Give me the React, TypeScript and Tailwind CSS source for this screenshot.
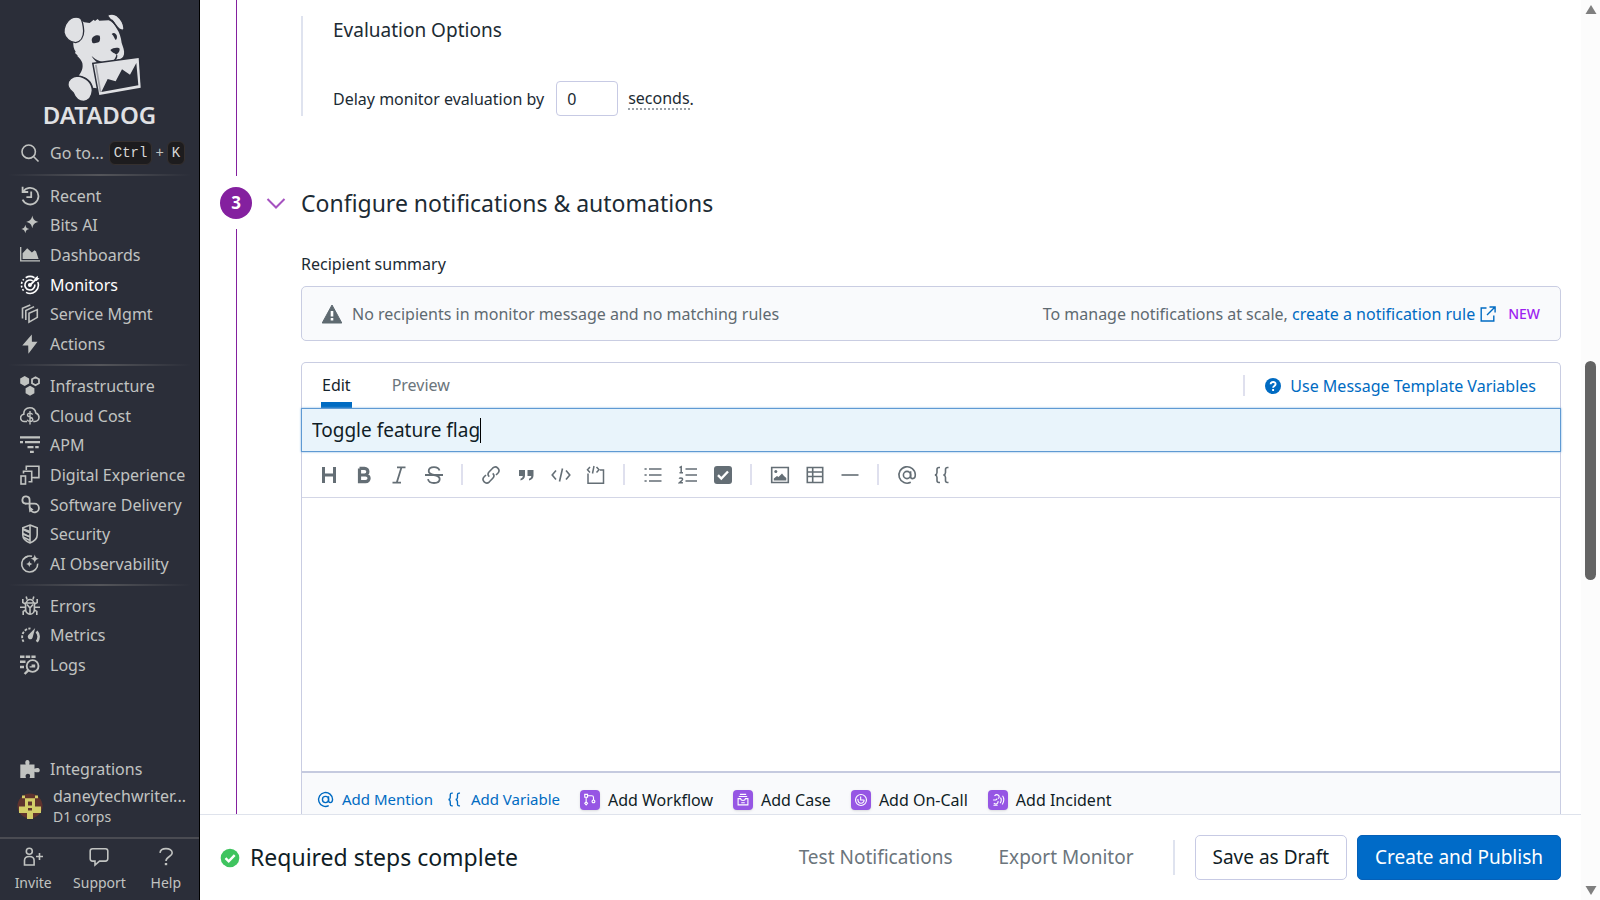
import type { ReactNode } from "react";

type IconProps = { children: ReactNode; className?: string };

function Icon({ children, className = "h-5 w-5" }: IconProps) {
  return (
    <svg
      viewBox="0 0 20 20"
      className={`${className} shrink-0`}
      fill="none"
      stroke="currentColor"
      strokeWidth="1.6"
      aria-hidden="true"
    >
      {children}
    </svg>
  );
}

const fill = { fill: "currentColor", stroke: "none" };

const icons: Record<string, ReactNode> = {
  Recent: (
    <>
      <path d="M3.2 5.6A8.3 8.3 0 1 1 2.6 13.6" strokeWidth="1.8" />
      <path d="M2.6.8v5.2h5.6" strokeWidth="1.8" />
      <path d="M11.2 5.4v5.8H6.4" strokeWidth="1.8" />
    </>
  ),
  "Bits AI": (
    <g {...fill}>
      <path d="M12.3.6c.8 4 2.200 5.500 6.200 6.300-4 .8-5.400 2.200-6.200 6.300-.8-4.100-2.200-5.500-6.200-6.300 4-.8 5.400-2.300 6.200-6.300z" />
      <path d="M5.300 9.800c.6 2.800 1.400 3.600 4.100 4.200-2.700.6-3.500 1.500-4.100 4.200-.6-2.700-1.400-3.600-4-4.200 2.600-.6 3.400-1.400 4-4.200z" />
    </g>
  ),
  Dashboards: (
    <>
      <path d="M.7 2v13.800H20" strokeWidth="1.300" />
      <path {...fill} d="M2.600 13.900V8.200l4.600-5 4.700 4.400 2.700-2.400 1.500 1.400 2.500 7.300z" />
    </>
  ),
  Monitors: (
    <>
      <path d="M5.700 2.700A8.400 8.400 0 0 1 14.500 2.700M17.800 7A8.400 8.400 0 0 1 6 17.400" />
      <path d="M3.600 15.600A8.400 8.400 0 0 1 3.800 4.200" strokeDasharray="1.900 1.700" />
      <path d="M12.700 5.800A5 5 0 1 0 14.900 9.500" />
      <path d="M9.800 10.300l7-7" strokeWidth="1.900" />
      <path {...fill} d="M14.600 3.200l3.200-2.400v2.100l1.800.3-3 2.700-2-.3z" />
      <circle {...fill} cx="9.900" cy="10.100" r="2" />
    </>
  ),
  "Service Mgmt": (
    <g strokeWidth="1.600">
      <path d="M9 9.200l8.300-3.600v7.800L9 18.200z" />
      <path d="M5.800 16V6.600l8.300-4" />
      <path d="M2.500 14.500V4.300L10.300.9" />
    </g>
  ),
  Actions: <path {...fill} d="M11.800.4L2.300 11.600h5.900L8.400 19.800l9.100-12h-5.600z" />,
  Infrastructure: (
    <>
      <g {...fill}>
        <path d="M4.700 0l4.400 2.500v5L4.700 10 .2 7.500v-5z" />
        <path d="M10 9.800l4.400 2.500v5L10 19.800l-4.400-2.500v-5z" />
      </g>
      <path d="M15.500 1.200l3.500 2v4l-3.500 2-3.500-2v-4z" strokeWidth="1.800" />
    </>
  ),
  "Cloud Cost": (
    <>
      <path d="M7 15.500H4.600a3.600 3.600 0 0 1-.8-7.200C3.500 4.500 6 1.700 9.700 1.700c3.300 0 5.700 2.200 6.100 5.300 2 .8 3.200 2.300 3.200 4.300 0 2.400-1.800 4.200-4.200 4.200h-1.600" />
      <path d="M12.600 8.600c-.5-1-1.400-1.500-2.600-1.500-1.500 0-2.500.7-2.500 2 0 2.900 5.300 1.500 5.300 4.300 0 1.200-1.100 2-2.700 2-1.400 0-2.500-.6-2.900-1.700M10 5v13.500" strokeWidth="1.400" />
    </>
  ),
  APM: (
    <path {...fill} d="M0 1.200h20v2.300H0zM0 6h3v2.200H0zM5 6h15v2.200H5zM7.500 11h6v2.200h-6zM15.200 11h3.500v2.200h-3.500zM10 15.800h3.800V18H10z" />
  ),
  "Digital Experience": (
    <>
      <path d="M6.300 5V1.200h12.600v11.400H14" />
      <path d="M3.500 8.500V6.300h8.200v10.500H8.500" />
      <rect x="1" y="11" width="4.500" height="8" />
      <path d="M11.700 12.600H14" />
    </>
  ),
  "Software Delivery": (
    <>
      <path d="M6.400 8.600H5.400a3.600 3.600 0 1 1 4.200-3.500v6.200c0 1.800.8 3 2.600 3" strokeWidth="1.800" />
      <path d="M5.200 8.700h9.400a4.300 4.300 0 1 1-4.200 5.200" strokeWidth="1.800" />
      <path {...fill} d="M8.600 11.600l5 2.900-4.200 3z" />
    </>
  ),
  Security: (
    <>
      <path d="M10 1l7.200 2.800v7.200c0 4-4 6.700-7.200 8-3.200-1.300-7.200-4-7.200-8V3.800z" />
      <path d="M10 1v18M3 5.500l7 3.300M3 9.500l7 3.400M3.600 13.300l6.400 3.200" />
      <path {...fill} d="M3 4l6.500 2.600v2L3 5.800zM3 9.600l6.500 2.500v1.500L3 11z" />
    </>
  ),
  "AI Observability": (
    <>
      <path d="M12 2.300A8 8 0 1 0 17.700 9.600" />
      <path d="M3.200 5.500A8 8 0 0 1 7.600 2.400" />
      <path {...fill} d="M14.800.6c.5 2.700 1.400 3.600 4.200 4.200-2.800.6-3.700 1.500-4.200 4.300-.6-2.800-1.500-3.700-4.300-4.300 2.800-.6 3.700-1.500 4.300-4.200zM9.300 6.800c.4 2 1.200 2.800 3.200 3.200-2 .4-2.800 1.200-3.200 3.200-.4-2-1.200-2.800-3.200-3.200 2-.4 2.800-1.200 3.200-3.200z" />
    </>
  ),
  Errors: (
    <>
      <path d="M5.600 7h8.800v6.200c0 3-2 5-4.400 5s-4.400-2-4.400-5z" />
      <path d="M6.500 7a3.500 3.500 0 0 1 7 0M10 18v-6l-3-3.500M10 12l3-3.500M7 3.500L6.200.5M13 3.500l.8-3" />
      <path d="M5.600 8L2.800 6.600V3M14.400 8l2.800-1.400V3M5.600 11.200H0M14.400 11.200H20M5.800 14l-2.600 1.400V19M14.200 14l2.600 1.400V19" />
    </>
  ),
  Metrics: (
    <>
      <path d="M3.600 16.800A8.600 8.600 0 0 1 10.500 3.400" strokeDasharray="2.600 1.400" strokeWidth="1.900" />
      <path d="M16.500 6.500c2.500 2.500 3 6.800.3 10.200" strokeWidth="2.600" />
      <path {...fill} d="M15.200 3L12.600 12.400c-.5 1.700-2.300 2.400-3.700 1.500-1.300-.9-1.500-2.600-.5-3.800z" />
    </>
  ),
  Logs: (
    <>
      <path {...fill} d="M0 .5h4.500v2.600H0zM5.700.5h4.500v2.600H5.700zM11.400.5h4.200v2.600h-4.200zM0 5.500h5.500v2.600H0zM0 10.700h4v2.600H0z" />
      <circle cx="12.600" cy="11" r="5.900" strokeWidth="1.900" />
      <path d="M8.500 15.200L4.600 19" strokeWidth="2.400" />
      <path {...fill} d="M9.600 11.200h2V9.400h3.600v3.200H9.600z" />
    </>
  ),
};

const groups = [
  { cls: "h-[178px]", items: ["Recent", "Bits AI", "Dashboards", "Monitors", "Service Mgmt", "Actions"] },
  {
    cls: "h-[208px]",
    items: ["Infrastructure", "Cloud Cost", "APM", "Digital Experience", "Software Delivery", "Security", "AI Observability"],
  },
  { cls: "h-[89px]", items: ["Errors", "Metrics", "Logs"] },
];

function DogLogo() {
  return (
    <svg viewBox="173 38 252 264" className="h-[88px] w-[84px]" aria-hidden="true">
      <g fill="#e0e1e4">
        {/* head, neck and chest */}
        <path d="M240 60L252 66L268 68L280 58L284 62L292 56L297 61L325 60C335 64 344 74 350 86C358 98 362 112 364 128C368 140 373 150 371 162C369 172 362 177 354 177L346 182L284 190L290 230L290 264L278 262C276 246 262 230 240 228L235 226C244 214 249 204 246 188C243 178 238 174 230 166L233 166L224 158L226 154C220 146 218 136 219 122Z" />
        <path d="M276 188L340 182L350 200L290 262Z" />
      </g>
      <g fill="#e0e1e4" stroke="#2b2e39" strokeWidth="4">
        {/* ears */}
        <path d="M212 54C198 62 190 80 191 97C194 114 210 126 226 127C241 124 250 110 250 92C249 76 247 62 241 54C232 49 221 50 212 54Z" />
        <path d="M321 46C329 39 342 41 350 46C360 54 370 70 371 84C370 92 364 90 357 86C346 78 341 62 330 57Z" />
        {/* front paw */}
        <path d="M232 227C214 228 203 240 203 252C202 264 212 270 219 278C225 294 236 303 250 303C266 301 275 288 276 270C275 246 256 230 232 227Z" />
      </g>
      <g fill="#2b2e39">
        <path d="M274 119C275 110 283 105 292 105L298 106C300 112 300 120 296 125C289 128 281 130 276 127Z" />
        <path d="M334 101C340 95 346 98 349 105C351 111 350 117 346 119C342 115 341 107 334 101Z" />
        <path d="M330 149C338 143 348 141 357 144C360 150 355 159 348 163C343 158 334 157 330 149Z" />
        <path d="M274 167C292 184 312 188 326 185C338 183 345 177 348 163L351 164C352 173 348 180 338 186C326 194 306 194 294 188C284 182 277 174 274 167Z" />
        <path d="M334 56C344 66 349 78 352 85L347 79C340 72 337 64 334 56Z" />
      </g>
      {/* picture held in the mouth */}
      <path d="M280 191L415 173L421 262L297 284Z" fill="#e0e1e4" stroke="#2b2e39" strokeWidth="9" />
      <path d="M280 191L415 173L421 262L297 284Z" fill="#e0e1e4" />
      <path d="M284 194L289 193L303 275L298 276Z" fill="#2b2e39" opacity="0.35" />
      <path d="M303 275L322 236L346 243L365 207L389 223L408 188L414 255Z" fill="#2b2e39" />
    </svg>
  );
}

function Divider() {
  return <div className="mx-2 my-[5px] h-[2px] shrink-0 bg-linear-to-r from-transparent via-[#54555a] to-transparent" />;
}

function Sidebar() {
  return (
    <aside className="flex w-[200px] shrink-0 flex-col border-r border-black bg-[#2b2e39] text-base text-[#c1c3c1]">
      <a href="#home" aria-label="Datadog home" className="flex flex-col items-center pt-[13px] text-[#e0e1e4]">
        <DogLogo />
        <span className="text-2xl leading-[28px] font-semibold">DATADOG</span>
      </a>
      <button className="mt-[7px] flex h-[33px] shrink-0 items-center pl-5 text-left">
        <Icon>
          <circle cx="8.700" cy="8.700" r="6.700" />
          <path d="M13.500 13.500l5 5" />
        </Icon>
        <span className="ml-[10px]">Go to...</span>
        <kbd className="ml-[5px] rounded-md border border-[#35302f] bg-[#1d1c1e] px-1 py-px font-['Liberation_Mono',monospace] text-sm text-[#d8d8d8]">Ctrl</kbd>
        <span className="mx-[3px] font-['Liberation_Mono',monospace] text-sm">+</span>
        <kbd className="rounded-md border border-[#35302f] bg-[#1d1c1e] px-1 py-px font-['Liberation_Mono',monospace] text-sm text-[#d8d8d8]">K</kbd>
      </button>
      <nav>
        {groups.map((g) => (
          <div key={g.cls}>
            <Divider />
            <ul className={`${g.cls} grid auto-rows-fr`}>
              {g.items.map((name) => (
                <li key={name} className="flex">
                  <a
                    href="#nav"
                    className={`flex flex-1 items-center gap-[10px] pl-5 leading-6 whitespace-nowrap ${name === "Monitors" ? "text-white" : ""}`}
                  >
                    <Icon>{icons[name]}</Icon>
                    {name}
                  </a>
                </li>
              ))}
            </ul>
          </div>
        ))}
      </nav>
      <div className="mt-auto">
        <a href="#integrations" className="flex h-[30px] items-center gap-[10px] pl-5">
          <Icon>
            <path
              {...fill}
              d="M.3 5.500h5.400c-.8-1.600-.6-4.500 1.700-4.500s2.500 2.900 1.700 4.500h5.400v4.200c1.500-.8 5.300-1.400 5.300 1.500s-3.800 2.300-5.300 1.500V19H9.600c1-2.500.4-4.300-1.700-4.300S5 16.500 6 19H.3z"
            />
          </Icon>
          Integrations
        </a>
        <button className="flex h-[44px] w-full items-center gap-[10px] pl-[17px] text-left">
          <svg viewBox="0 0 26 26" className="h-[26px] w-[26px] shrink-0" aria-hidden="true">
            <circle cx="13" cy="13" r="12.500" fill="#5f332e" />
            <path
              fill="#d3cd68"
              fillRule="evenodd"
              d="M5 2.500h3v2.800H5zM18 2.500h3v2.800h-3zM8 5.300h10v8.200h6v6.500h-8v6h-6v-6H2v-6.500h6zM11 8.500v4h4v-4zM11 15v2.500h4V15z"
            />
          </svg>
          <span className="flex flex-col">
            <span className="leading-[22px]">daneytechwriter...</span>
            <span className="text-sm leading-[20px]">D1 corps</span>
          </span>
        </button>
      </div>
      <div className="mt-[9px] grid h-[63px] shrink-0 grid-cols-3 border-t-2 border-[#4a4b52] text-sm">
        <button className="flex flex-col items-center gap-[6px] pt-2">
          <Icon>
            <circle cx="6.300" cy="4.200" r="3" />
            <path d="M1.500 18v-4.500c0-2.500 2-4 4.800-4s4.800 1.500 4.800 4V18z" />
            <path d="M13 9.500h7M16.500 6v7" />
          </Icon>
          Invite
        </button>
        <button className="flex flex-col items-center gap-[6px] pt-2">
          <Icon>
            <path d="M3.500 1.800h13a2.300 2.300 0 0 1 2.300 2.300v7.700a2.300 2.300 0 0 1-2.300 2.300h-6L6 18v-3.900H3.500a2.300 2.300 0 0 1-2.300-2.300V4.100a2.300 2.300 0 0 1 2.300-2.300z" />
          </Icon>
          Support
        </button>
        <button className="flex flex-col items-center gap-[6px] pt-2">
          <Icon>
            <path d="M4 5.800c.3-2.600 2.700-4.200 6-4.200 3.400 0 6.200 1.600 6.200 4.400 0 3.600-6.200 3.400-6.200 8" />
            <path d="M10 16v2.200" strokeWidth="2.400" />
          </Icon>
          Help
        </button>
      </div>
    </aside>
  );
}

const atSign = (
  <>
    <circle cx="10" cy="10" r="3.600" />
    <path d="M13.600 6.200v5c0 1.500.8 2.400 2 2.400 1.700 0 2.700-1.500 2.700-3.800A8.200 8.200 0 1 0 13.800 17.300" />
  </>
);
const braces = (
  <path d="M8 2.500H7c-1.500 0-2 .8-2 2v3c0 1.500-.7 2.200-2 2.500 1.300.3 2 1 2 2.500v3c0 1.200.5 2 2 2h1M16.500 2.500h-1c-1.500 0-2 .8-2 2v3c0 1.500-.7 2.200-2 2.500 1.300.3 2 1 2 2.500v3c0 1.200.5 2 2 2h1" />
);

const tools: { label: string; icon: ReactNode }[][] = [
  [
    { label: "Heading", icon: <path strokeWidth="3" d="M4.500 2v16M15.500 2v16M4.500 10h11" /> },
    { label: "Bold", icon: <path strokeWidth="3.200" d="M5.500 3.400v13.200h6c4.800 0 4.800-6.600 0-6.600h-6M5.500 3.400h5c4.500 0 4.500 6.600 0 6.600" /> },
    { label: "Italic", icon: <path strokeWidth="1.800" d="M8 2.300h8.500M3.500 17.700H12M12.500 2.300l-4.800 15.400" /> },
    { label: "Strikethrough", icon: <path strokeWidth="1.800" d="M15.500 5.500c-.6-2-2.500-3.300-5.500-3.300-3.200 0-5.300 1.500-5.300 3.900 0 2.200 1.500 3.200 5.300 3.900 4 .8 5.700 1.800 5.700 4 0 2.400-2.200 4-5.700 4-3.400 0-5.500-1.500-6-3.900M1 10h18" /> },
  ],
  [
    { label: "Link", icon: <path d="M8.300 11.700c-1.600-1.500-1.500-3.500-.1-5l3.400-3.500c1.600-1.500 3.800-1.500 5.200-.1s1.500 3.600 0 5.200L15 10M11.700 8.300c1.600 1.500 1.500 3.500.1 5l-3.400 3.500c-1.600 1.500-3.800 1.500-5.200.1s-1.500-3.600 0-5.200L5 10" /> },
    { label: "Quote", icon: <path {...fill} d="M3 5h6v5.500c0 2.500-1.600 4.300-4.500 5v-1.800c1.400-.5 2.200-1.300 2.300-2.700H3zM11.500 5h6v5.500c0 2.500-1.600 4.300-4.500 5v-1.800c1.400-.5 2.200-1.300 2.300-2.700h-3.800z" /> },
    { label: "Code", icon: <path d="M5 5.500L1.200 10 5 14.500M15 5.500l3.800 4.500-3.800 4.500M11.500 3.500l-3 13" /> },
    { label: "Code block", icon: <path strokeWidth="1.500" d="M2 8.500v9.700h15.500V5H14M4 2L1.500 4.800 4 7.500M10.500 2L13 4.800 10.500 7.500M8 1L6.500 8.500" /> },
  ],
  [
    { label: "Bulleted list", icon: <path d="M1.500 4h2.200M1.500 10h2.200M1.500 16h2.200M6 4h12.500M6 10h12.500M6 16h12.500" /> },
    { label: "Numbered list", icon: <path strokeWidth="1.500" d="M7.500 4H19M7.500 10H19M7.500 16H19M1.500 2.700l1.700-1v6M1.500 7.700H5M1.300 13.700c.3-1 3.300-1.200 3.300.5 0 1-1.600 2-3.200 3.500h3.500" /> },
    {
      label: "Checklist",
      icon: (
        <>
          <rect {...fill} x="1" y="1" width="18" height="18" rx="3" />
          <path d="M5 10.200l3.300 3.300 6.700-7" stroke="white" strokeWidth="2.400" />
        </>
      ),
    },
  ],
  [
    {
      label: "Image",
      icon: (
        <>
          <path d="M1.700 2.500h16.600v15H1.700z" />
          <path {...fill} d="M3.800 15.500v-2l3.200-2.500 1.500 1L12 8.500l2 2.500 2.300 2v2.500z" />
          <circle {...fill} cx="5.800" cy="6.500" r="1.500" />
        </>
      ),
    },
    { label: "Table", icon: <path d="M2.300 2.500h15.400v15H2.300zM2.300 7h15.400M2.300 11.500h15.400M7.700 2.500v15" /> },
    { label: "Horizontal rule", icon: <path d="M1.500 10h17" /> },
  ],
  [
    { label: "Mention", icon: atSign },
    { label: "Variable", icon: braces },
  ],
];

const adders = [
  {
    label: "Add Workflow",
    icon: <path d="M2.500 2h4v4h-4zM4.500 6v6.500M6.500 4h6c1.500 0 2.500 1 2.500 2.500V10M4.500 12.500l2 2.300-2 2.200-2-2.200zM15 10a2 2 0 1 1-.1 0" />,
  },
  {
    label: "Add Case",
    icon: <path d="M3 8h3.500c.5 3.500 6.500 3.500 7 0H17v9H3zM4 5h12M5.500 2h9M7.500 14h5" />,
  },
  {
    label: "Add On-Call",
    icon: (
      <>
        <circle cx="10" cy="10" r="7.800" />
        <path d="M5.500 8.500c0 8 9 8 9 1M9.500 5v5h4.500" />
      </>
    ),
  },
  {
    label: "Add Incident",
    icon: (
      <path d="M5 4c4-4 9 .5 5.500 4M3 10h4l2-2M4 14.500c3 2.500 6.500.5 6-3M3.500 17.500h6M13.500 6.500c1.500 2 1.500 5-.5 8M16.500 4c2.500 4 2.200 8.500-.5 12.500" />
    ),
  },
];

function StepTwo() {
  return (
    <section className="flex h-[176px] shrink-0 pl-5">
      <div className="flex w-8 shrink-0 justify-center">
        <div className="w-px bg-[#84209f]" />
      </div>
      <div className="mt-4 ml-[49px] flex h-[100px] flex-col justify-between border-l-2 border-[#dfe3ef] pl-[30px] text-[#1c2b34]">
        <h3 className="text-[19px] leading-[28px]">Evaluation Options</h3>
        <div className="flex items-center text-base">
          <label htmlFor="delay">Delay monitor evaluation by</label>
          <input
            id="delay"
            defaultValue="0"
            className="ml-3 h-[35px] w-[62px] rounded-[4px] border border-[#c7cae4] px-[10px] outline-none"
          />
          <span className="ml-[10px] border-b-2 border-dotted border-[#9aa1a8] leading-[20px]">seconds</span>.
        </div>
      </div>
    </section>
  );
}

function Editor() {
  return (
    <div className="mt-[21px] flex min-h-0 flex-1 flex-col rounded-t-[5px] border border-b-0 border-[#c9cde2]">
      <div className="flex h-[45px] shrink-0 items-stretch pl-[19px] text-base">
        <div role="tablist" className="flex items-stretch gap-10">
          <button role="tab" aria-selected="true" className="border-b-[6px] border-[#006bc2] px-px pt-[5px] text-[#17242d]">
            Edit
          </button>
          <button role="tab" aria-selected="false" className="border-b-[6px] border-transparent pt-[5px] text-[#6b757c]">
            Preview
          </button>
        </div>
        <div className="ml-auto flex items-center pr-6">
          <div className="h-[21px] w-[2px] bg-[#dfe0ee]" />
          <a href="#variables" className="ml-5 flex items-center gap-[9px] text-[#006bc2]">
            <svg viewBox="0 0 16 16" className="h-4 w-4" aria-hidden="true">
              <circle cx="8" cy="8" r="8" fill="#006bc2" />
              <path d="M5.600 6.300c0-3 5-3 5-.2C10.600 8 8.100 8 8.100 9.800M8.100 11v2" fill="none" stroke="white" strokeWidth="1.900" />
            </svg>
            Use Message Template Variables
          </a>
        </div>
      </div>
      <div className="-mx-px flex h-[44px] shrink-0 items-center border border-[#5f9ad3] bg-[#e9f4fb] pl-[10px] text-[19px] text-[#101d26] shadow-[0_0_2px_#7fb0e0]">
        <input aria-label="Notification title" defaultValue="Toggle feature flag" className="[field-sizing:content] outline-none" />
        <span className="h-[25px] w-px bg-black" />
      </div>
      <div role="toolbar" aria-label="Formatting" className="flex h-[46px] shrink-0 items-center border-b border-[#d3d6e6] pl-[9px] text-[#646e75]">
        {tools.map((group, i) => (
          <div key={group[0].label} className="flex items-center">
            {i > 0 && <div className="mx-[10px] h-[21px] w-[2px] bg-[#dfe0ee]" />}
            {group.map((tool) => (
              <button key={tool.label} aria-label={tool.label} className="flex h-8 w-[35px] items-center justify-center">
                <Icon>{tool.icon}</Icon>
              </button>
            ))}
          </div>
        ))}
      </div>
      <textarea aria-label="Notification message" className="min-h-0 w-full flex-1 resize-none px-4 py-3 outline-none" />
      <div className="flex h-[43px] shrink-0 items-center border-t-2 border-[#c5cadf] bg-[#f9fafc] pt-[12px] pl-[15px]">
        <button className="flex items-center gap-2 text-[15px] text-[#006bc2]">
          <Icon className="h-[17px] w-[17px]">{atSign}</Icon>
          Add Mention
        </button>
        <button className="ml-[13px] flex items-center gap-2 text-[15px] text-[#006bc2]">
          <Icon className="h-[17px] w-[17px]">{braces}</Icon>
          Add Variable
        </button>
        <div className="ml-5 flex gap-5 text-base text-[#101d26]">
          {adders.map((a) => (
            <button key={a.label} className="flex items-center gap-2">
              <span className="flex h-5 w-5 items-center justify-center rounded-[4px] bg-[#9656e4] text-white shadow-sm">
                <Icon className="h-[14px] w-[14px]">{a.icon}</Icon>
              </span>
              {a.label}
            </button>
          ))}
        </div>
      </div>
    </div>
  );
}

function StepThree() {
  return (
    <section className="flex min-h-0 flex-1 pr-5 pl-5">
      <div className="flex w-8 shrink-0 flex-col items-center gap-[10px] pt-[11px]">
        <div className="flex h-8 w-8 shrink-0 items-center justify-center rounded-full bg-[#84209f] text-[17px] font-bold text-white">3</div>
        <div className="w-px flex-1 bg-[#84209f]" />
      </div>
      <div className="w-[49px] shrink-0 pt-[11px]">
        <button aria-label="Collapse section" className="flex h-8 w-full items-center pl-[14px]">
          <svg viewBox="0 0 20 20" className="h-5 w-5" fill="none" stroke="#a552c0" strokeWidth="2" aria-hidden="true">
            <path d="M1.500 6l8.500 8.500L18.500 6" />
          </svg>
        </button>
      </div>
      <div className="flex min-h-0 min-w-0 flex-1 flex-col pt-[11px]">
        <h2 className="text-[23px] leading-8 text-[#1c2b34]">Configure notifications &amp; automations</h2>
        <h3 className="mt-[33px] text-base leading-6 text-[#1c2b34]">Recipient summary</h3>
        <div className="mt-[10px] flex h-[55px] shrink-0 items-center rounded-[5px] border border-[#c9cde2] bg-[#f9fafc] px-5 text-base text-[#5f6a71]">
          <svg viewBox="0 0 20 20" className="mr-[10px] h-5 w-5" aria-hidden="true">
            <path d="M10 1L19.800 19H.2z" fill="#5f6a71" stroke="#5f6a71" strokeLinejoin="round" />
            <path d="M10 7v5.500M10 14v2.600" stroke="white" strokeWidth="2.600" />
          </svg>
          <span>No recipients in monitor message and no matching rules</span>
          <span className="ml-auto flex items-center">
            To manage notifications at scale,&nbsp;
            <a href="#rule" className="flex items-center gap-[5px] text-[#006bc2]">
              create a notification rule
              <svg viewBox="0 0 16 16" className="h-4 w-4" fill="none" stroke="currentColor" strokeWidth="1.400" aria-hidden="true">
                <path d="M6.500 2H1.200v13h12.600V9.500M9.500 1h5.600v5.600M15 1L7 9" />
              </svg>
            </a>
            <span className="ml-3 text-sm font-medium text-[#9d1ff0]">NEW</span>
          </span>
        </div>
        <Editor />
      </div>
    </section>
  );
}

function ActionBar() {
  return (
    <footer className="flex h-[86px] shrink-0 items-center border-t border-[#dfe3ec] pr-5 pl-5 text-[19px] text-[#101d26]">
      <svg viewBox="0 0 20 20" className="h-5 w-5 shrink-0" aria-hidden="true">
        <circle cx="10" cy="10" r="9.300" fill="#3fc45f" />
        <path d="M5.500 10.200l3.200 3.200 6-6.200" fill="none" stroke="white" strokeWidth="2.400" />
      </svg>
      <span className="ml-[10px] text-[23px]">Required steps complete</span>
      <div className="ml-auto flex items-center">
        <button className="text-[#6b757c]">Test Notifications</button>
        <button className="ml-[46px] text-[#6b757c]">Export Monitor</button>
        <div className="ml-[39px] h-[35px] w-[2px] bg-[#dfe3ef]" />
        <button className="ml-5 h-[45px] rounded-[5px] border border-[#c7cae4] px-[17px]">Save as Draft</button>
        <button className="ml-[10px] h-[45px] rounded-[5px] border border-[#0560b8] bg-[#006bc8] px-[17px] text-white">Create and Publish</button>
      </div>
    </footer>
  );
}

function ScrollTrack() {
  return (
    <div className="flex w-[19px] shrink-0 flex-col items-center bg-[#fcfcfc] py-[5px] text-[#7f7f7f]" aria-hidden="true">
      <svg viewBox="0 0 12 9" className="h-[9px] w-3"><path d="M6 0l5.500 9H.5z" fill="currentColor" /></svg>
      <div className="flex-[347]" />
      <div className="w-[11px] flex-[218] rounded-full bg-[#636363]" />
      <div className="flex-[306]" />
      <svg viewBox="0 0 12 9" className="h-[9px] w-3"><path d="M6 9L.5 0h11z" fill="currentColor" /></svg>
    </div>
  );
}

export default function App() {
  return (
    <div className="flex h-screen overflow-hidden bg-white font-['Noto_Sans',sans-serif]">
      <Sidebar />
      <main className="flex min-w-0 flex-1 flex-col">
        <StepTwo />
        <StepThree />
        <ActionBar />
      </main>
      <ScrollTrack />
    </div>
  );
}
